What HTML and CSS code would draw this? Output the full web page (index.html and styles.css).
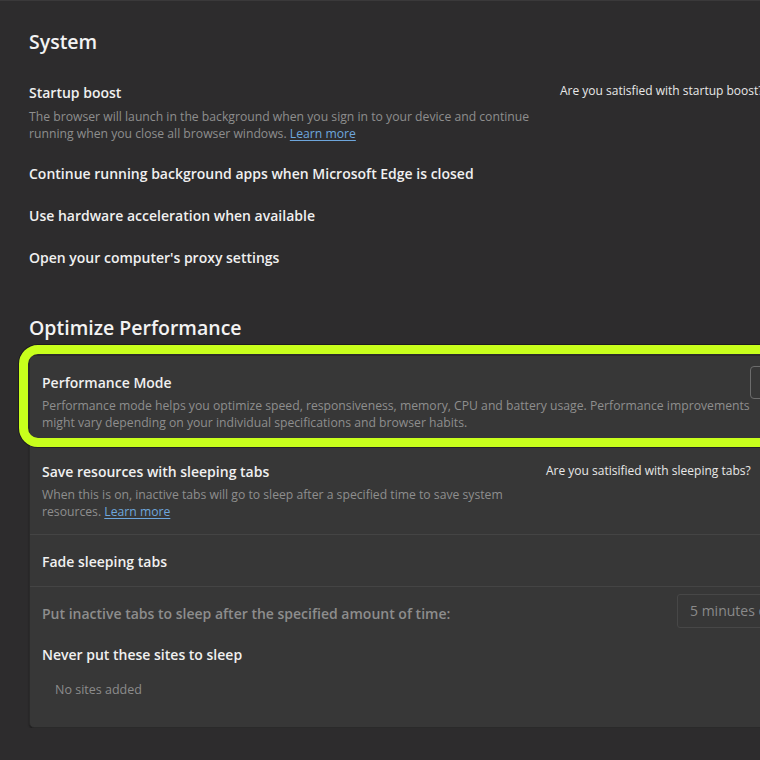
FILE: index.html
```html
<!DOCTYPE html>
<html lang="en">
<head>
    <meta charset="UTF-8">
    <meta name="viewport" content="width=device-width, initial-scale=1.0">
    <title>System and performance</title>
    <link rel="stylesheet" href="styles.css">
</head>
<body>

    <div class="page">

        <!-- System -->
        <h2 class="section-title">System</h2>

        <div class="sys-row">
            <div class="sys-main">
                <div class="item-title">Startup boost</div>
                <div class="item-desc">The browser will launch in the background when you sign in to your device and continue running when you close all browser windows. <a href="#" class="link">Learn more</a></div>
            </div>
            <div class="feedback">Are you satisfied with startup boost?</div>
        </div>

        <div class="sys-row">
            <div class="item-title">Continue running background apps when Microsoft Edge is closed</div>
        </div>

        <div class="sys-row">
            <div class="item-title">Use hardware acceleration when available</div>
        </div>

        <div class="sys-row">
            <div class="item-title">Open your computer's proxy settings</div>
        </div>

        <!-- Optimize Performance -->
        <h2 class="section-title perf-title">Optimize Performance</h2>

        <div class="card">
            <div class="card-row perf-row">
                <div class="perf-main">
                    <div class="item-title">Performance Mode</div>
                    <div class="item-desc">Performance mode helps you optimize speed, responsiveness, memory, CPU and battery usage. Performance improvements might vary depending on your individual specifications and browser habits.</div>
                </div>
                <div class="mode-box"></div>
                <div class="highlight"></div>
            </div>

            <div class="card-row">
                <div class="sleep-main">
                    <div class="item-title">Save resources with sleeping tabs</div>
                    <div class="item-desc">When this is on, inactive tabs will go to sleep after a specified time to save system resources. <a href="#" class="link">Learn more</a></div>
                </div>
                <div class="feedback">Are you satisified with sleeping tabs?</div>
            </div>

            <div class="card-row simple">
                <div class="item-title">Fade sleeping tabs</div>
            </div>

            <div class="card-row inactive-row">
                <div class="item-title dim">Put inactive tabs to sleep after the specified amount of time:</div>
                <div class="select">5 minutes of inactivity</div>
            </div>

            <div class="never-block">
                <div class="item-title">Never put these sites to sleep</div>
                <div class="empty">No sites added</div>
            </div>
        </div>

    </div>

</body>
</html>
```

FILE: styles.css
```css
/* Global */
html, body {
    margin: 0;
    background-color: #2d2c2d;
    overflow: hidden;
}

body {
    font-family: 'Open Sans', 'Noto Sans', sans-serif;
    color: #f0f0f0;
    border-top: 1px solid #3a393a;
}

.page {
    width: 820px;
    padding: 27px 0 0 29px;
}

.section-title {
    font-size: 19.5px;
    line-height: 28px;
    font-weight: 600;
    margin: 0;
    color: #f3f3f3;
}

.perf-title {
    margin-top: 35px;
}

.item-title {
    font-size: 14px;
    line-height: 20px;
    font-weight: 600;
    color: #f0f0f0;
    white-space: nowrap;
}

.item-title.dim {
    color: #8d8d8d;
}

.item-desc {
    font-size: 12.2px;
    line-height: 17px;
    color: #8e8e8e;
    margin-top: 5px;
}

.link {
    color: #6ea6dc;
    text-decoration: underline;
    text-underline-offset: 2px;
}

.feedback {
    font-size: 12px;
    line-height: 18px;
    color: #e8e8e8;
    white-space: nowrap;
}

/* System rows */
.sys-row {
    display: flex;
    align-items: flex-start;
    padding: 11px 0;
}

.sys-row:first-of-type {
    margin-top: 16px;
}

.sys-main {
    width: 531px;
    flex-shrink: 0;
}

.sys-main .item-desc {
    width: 508px;
}

.sys-row .feedback {
    margin-top: -1px;
}

/* Card */
.card {
    margin-top: 13px;
    width: 780px;
    background-color: #373737;
    border: 1px solid #2a2a2a;
    border-radius: 5px;
    box-shadow: 0 1px 2px rgba(0, 0, 0, 0.4);
    padding-bottom: 28px;
}

.card .item-desc {
    margin-top: 4px;
}

.card-row {
    display: flex;
    align-items: flex-start;
    padding: 15px 12px 14px;
    border-top: 1px solid #444444;
}

.card-row.simple {
    padding: 17px 12px 14px;
}

.perf-row {
    position: relative;
    border-top: none;
    padding: 17px 12px 15px;
}

.perf-main {
    width: 708px;
    flex-shrink: 0;
}

.mode-box {
    width: 40px;
    height: 31px;
    margin-top: -7px;
    border: 1px solid #6c6c6c;
    border-radius: 4px;
}

/* annotation ring round the performance row */
.highlight {
    position: absolute;
    left: -11px;
    top: -11px;
    right: -60px;
    bottom: -1px;
    border: 9px solid #c8ff1c;
    border-radius: 19px;
    box-shadow: 0 0 0 1px rgba(0, 0, 0, 0.35);
}

.sleep-main {
    width: 504px;
    flex-shrink: 0;
}

.sleep-main .item-desc {
    width: 470px;
}

.inactive-row {
    padding: 7px 12px 8px;
}

.inactive-row .item-title {
    width: 635px;
    flex-shrink: 0;
    padding-top: 10px;
}

.select {
    width: 170px;
    height: 34px;
    box-sizing: border-box;
    border: 1px solid #474747;
    border-radius: 3px;
    padding: 0 12px;
    font-size: 14px;
    line-height: 32px;
    color: #8a8a8a;
    white-space: nowrap;
    overflow: hidden;
}

.never-block {
    padding: 9px 12px 0;
}

.empty {
    font-size: 12.5px;
    line-height: 18px;
    color: #8c8c8c;
    margin-top: 16px;
    padding-left: 13px;
}
```
